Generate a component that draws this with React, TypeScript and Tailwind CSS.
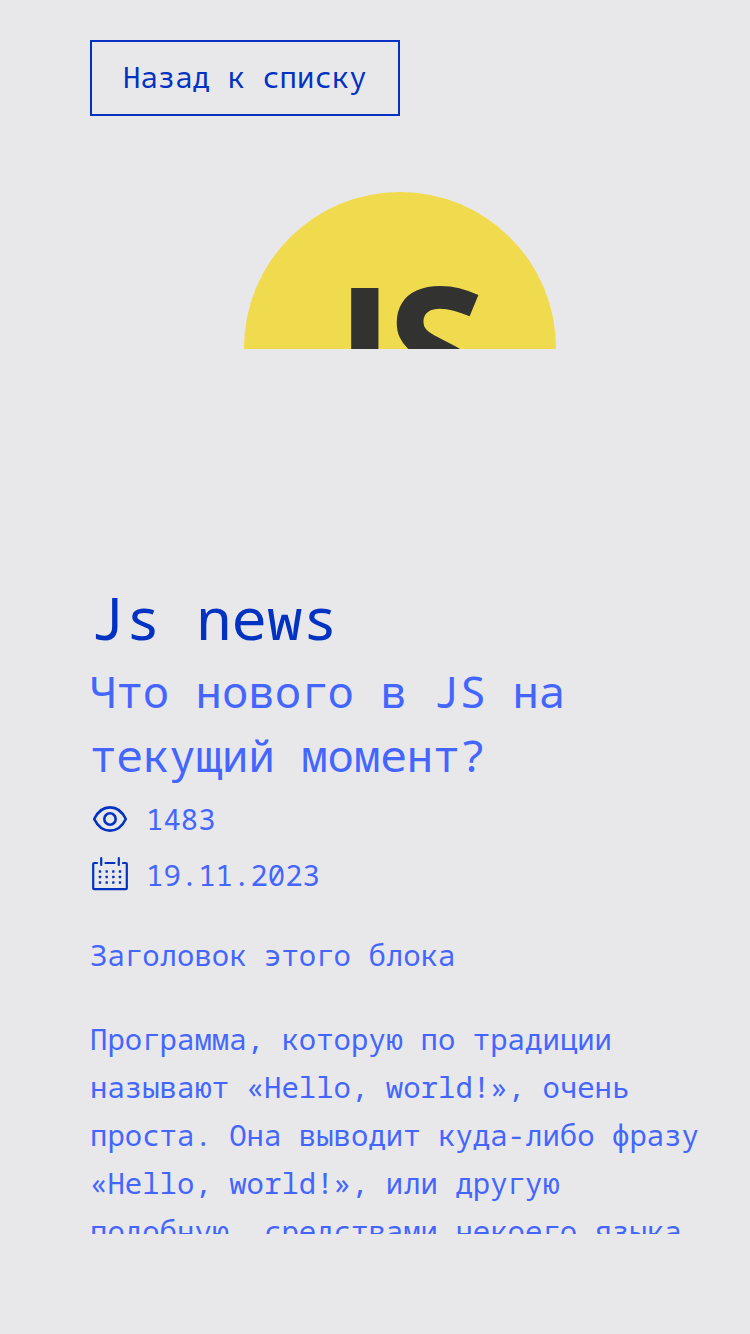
const paragraph =
  "Программа, которую по традиции называют «Hello, world!», очень проста. Она выводит куда-либо фразу «Hello, world!», или другую подобную, средствами некоего языка.";

function Logo() {
  return (
    <div className="flex h-[312px] w-[312px] items-start">
      <svg viewBox="0 0 312 157" className="block h-auto w-full overflow-hidden" role="img" aria-label="JS">
        <circle cx="156" cy="156" r="156" fill="#f0db4f" />
        <g fill="#323330" fontFamily="'Open Sans', 'Noto Sans', sans-serif" fontWeight="700" fontSize="180">
          <text x="91" y="224">J</text>
          <text x="143" y="224">S</text>
        </g>
      </svg>
    </div>
  );
}

function EyeIcon() {
  return (
    <svg viewBox="0 0 40 40" className="h-10 w-10 shrink-0" fill="none" stroke="#0232c2" strokeWidth="2.6" aria-hidden="true">
      <path d="M4.200 20C8 12 13.500 8.400 20 8.400S32 12 35.800 20C32 28 26.500 31.600 20 31.600S8 28 4.200 20Z" strokeLinejoin="round" />
      <circle cx="20" cy="20" r="5.7" />
    </svg>
  );
}

function CalendarIcon() {
  const columns = [10, 16.7, 23.3, 30];
  const rows = [16.5, 22, 27.5];
  return (
    <svg viewBox="0 0 40 40" className="h-10 w-10 shrink-0" fill="none" stroke="#0232c2" strokeWidth="2.2" strokeLinecap="round" strokeLinejoin="round" aria-hidden="true">
      <path d="M7 8H4.200Q3.200 8 3.200 9V33.200Q3.200 34.200 4.200 34.200H35.800Q36.800 34.200 36.800 33.200V9Q36.800 8 35.800 8H33M15.500 8H24.500M11.200 3.200V10M28.800 3.200V10" />
      <g fill="#0232c2" stroke="none">
        {rows.map((y) => columns.map((x) => <rect key={`${x}-${y}`} x={x - 1.2} y={y - 1.2} width="2.4" height="2.4" rx="0.4" />))}
      </g>
    </svg>
  );
}

export default function App() {
  return (
    <div className="flex h-screen flex-col bg-[#e8e8ea] pb-[100px] font-['Noto_Sans_Mono','DejaVu_Sans_Mono',monospace] text-[29px] leading-[48px] text-[#4466ff]">
      <main className="min-h-0 flex-1 overflow-y-auto pt-10 pr-10 pl-[90px] [scrollbar-width:none]">
        <button type="button" className="block border-2 border-[#0232c2] px-[31px] pt-[11px] pb-[13px] text-[#0232c2]">
          Назад к списку
        </button>
        <article>
          <div className="mt-[76px] flex justify-center">
            <Logo />
          </div>
          <h1 className="mt-[75px] text-[59px] leading-[76px] text-[#0232c2]">Js news</h1>
          <h2 className="mt-1 text-[44px] leading-[64px]">Что нового в JS на текущий момент?</h2>
          <div className="mt-2 flex flex-col gap-2">
            <div className="flex items-center gap-4">
              <EyeIcon />
              <span>1483</span>
            </div>
            <div className="flex items-center gap-4">
              <CalendarIcon />
              <time dateTime="2023-11-19">19.11.2023</time>
            </div>
          </div>
          <section className="mt-8">
            <h3>Заголовок этого блока</h3>
            <p className="mt-9">{paragraph}</p>
          </section>
        </article>
      </main>
    </div>
  );
}
